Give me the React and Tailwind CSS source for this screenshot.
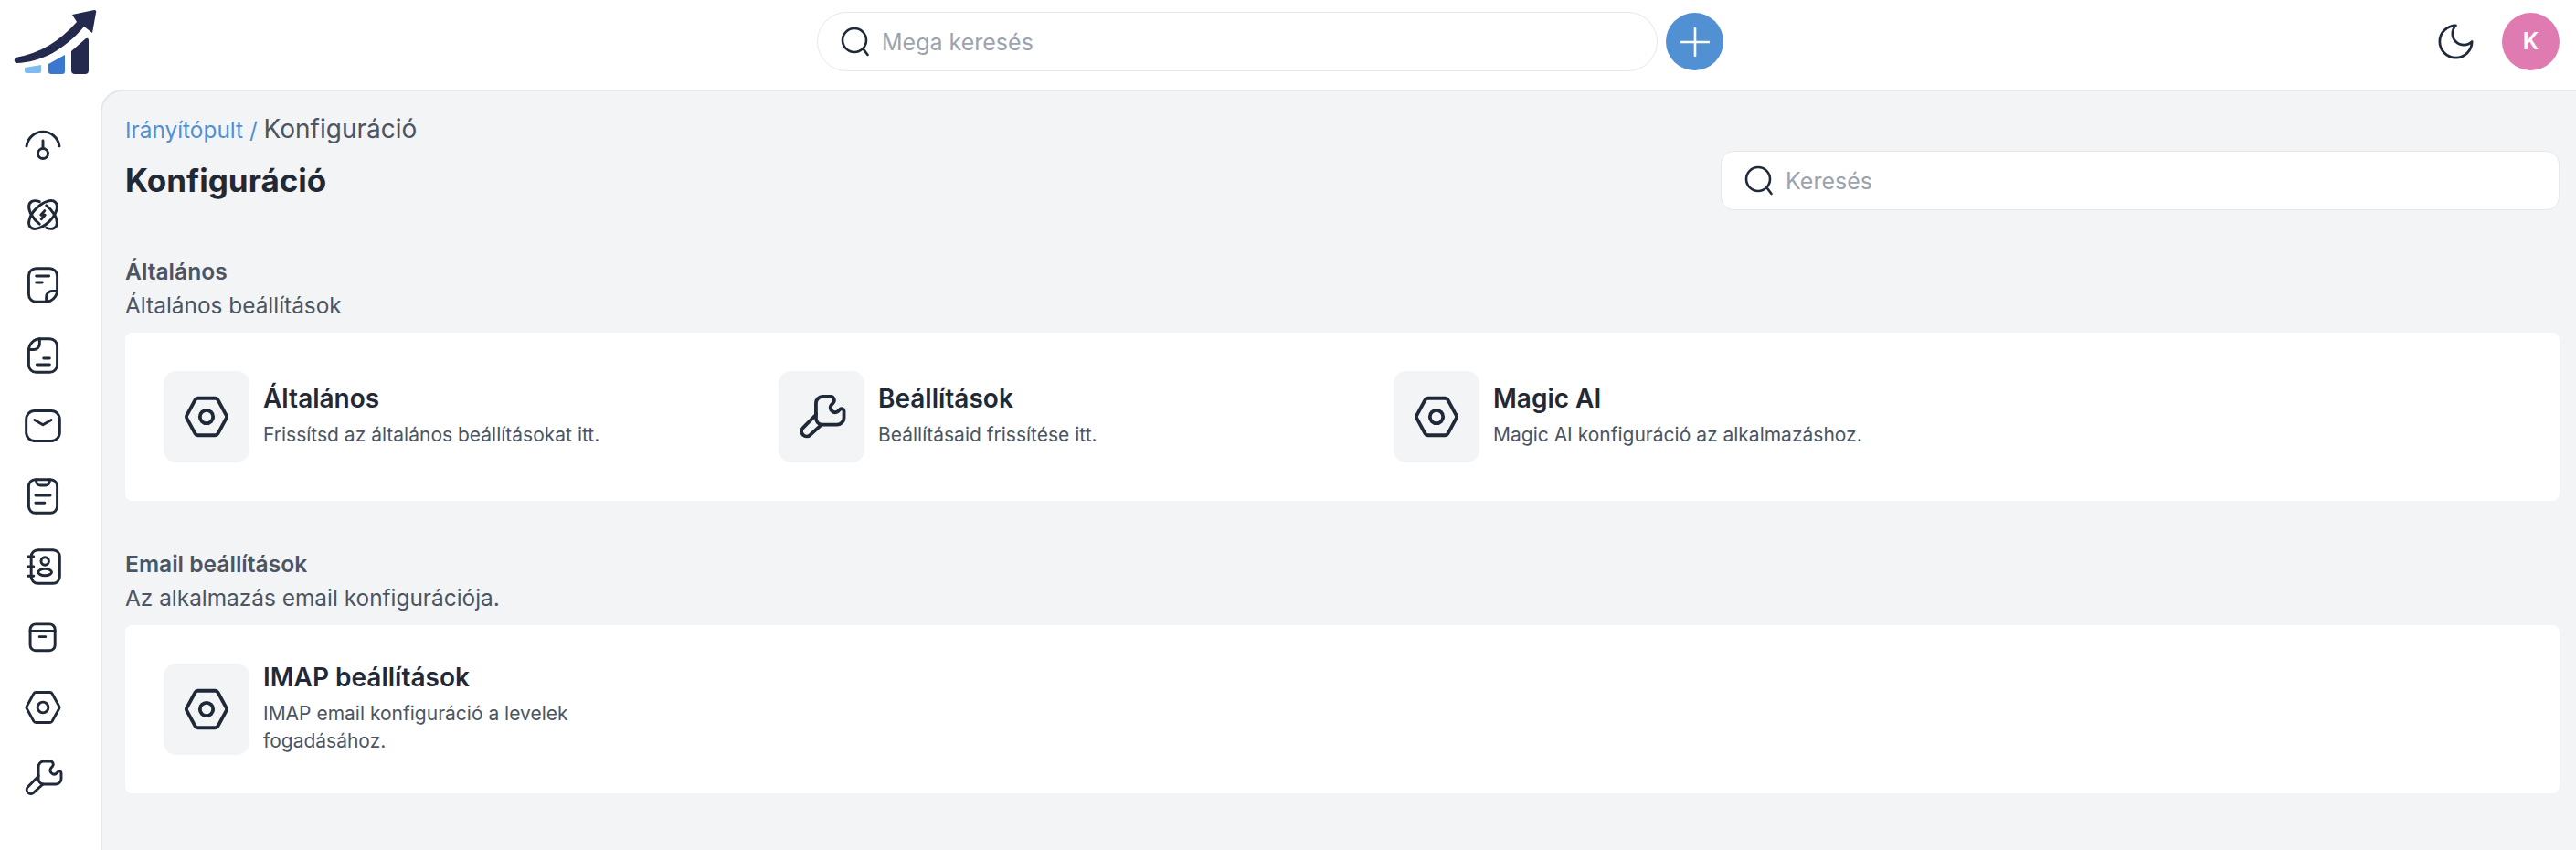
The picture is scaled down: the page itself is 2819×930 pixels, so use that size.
const Svg = ({ size = 44, sw = 1.6, children }) => (
  <svg width={size} height={size} viewBox="0 0 24 24" fill="none" stroke="#1f2937" strokeWidth={sw} strokeLinecap="round" strokeLinejoin="round" className="shrink-0">
    {children}
  </svg>
);

const HEX = 'M16.2 3H7.8a1.5 1.5 0 0 0-1.3.75L2.4 11.25a1.5 1.5 0 0 0 0 1.5l4.1 7.5A1.5 1.5 0 0 0 7.8 21h8.4a1.5 1.5 0 0 0 1.3-.75l4.1-7.5a1.5 1.5 0 0 0 0-1.5l-4.1-7.5A1.5 1.5 0 0 0 16.2 3z';
const WRENCH = 'M12.5 2.2h4a1.8 1.8 0 0 1 1.2 3l-.9 1a2.3 2.3 0 0 0 3.2 3.2l1-1a1.1 1.1 0 0 1 1.9.7v3.4a3.3 3.3 0 0 1-3.3 3.3H12l-5.5 5a2.4 2.4 0 0 1-3.5-3.4L9.3 11V5.4a3.2 3.2 0 0 1 3.2-3.2z';
const NOTE = 'M8 2h8a4.5 4.5 0 0 1 4.5 4.5V15a7 7 0 0 1-7 7H8a4.5 4.5 0 0 1-4.5-4.5v-11A4.5 4.5 0 0 1 8 2z';

const Hexagon = ({ size, sw }) => (
  <Svg size={size} sw={sw}>
    <path d={HEX} />
    <circle cx="12" cy="12" r="3.2" />
  </Svg>
);

const Wrench = ({ size, sw }) => (
  <Svg size={size} sw={sw}>
    <path d={WRENCH} />
    <path d="M9.3 10.5v2a3.3 3.3 0 0 0 2.7 3.3" />
  </Svg>
);

const navIcons = [
  <Svg key="gauge">
    <path d="M2.2 13A9.9 10 0 0 1 21.8 13" />
    <path d="M12 9.8v4.7" />
    <circle cx="12" cy="17.5" r="3" />
  </Svg>,
  <Svg key="orbit">
    <ellipse cx="12" cy="12" rx="10.5" ry="5.5" transform="rotate(-45 12 12)" />
    <g transform="translate(12 12) rotate(45)">
      <path d="M2.47 5.35A10.5 5.5 0 0 1-6.97-4.11" />
      <path d="M-2.47-5.35A10.5 5.5 0 0 1 6.97 4.11" />
    </g>
    <path d="M13 9.6l-2.2 2.5h2.4L11 14.6" />
  </Svg>,
  <Svg key="note">
    <path d={NOTE} />
    <path d="M20.5 15.5h-3a3.5 3.5 0 0 0-3.5 3.5v3" />
    <path d="M8 6.5h7.6M8 10.4h3.6" />
  </Svg>,
  <Svg key="note-flip">
    <g transform="rotate(180 12 12)">
      <path d={NOTE} />
      <path d="M20.5 15.5h-3a3.5 3.5 0 0 0-3.5 3.5v3" />
      <path d="M8 6.5h7.6M8 10.4h3.6" />
    </g>
  </Svg>,
  <Svg key="mail">
    <rect x="2" y="3" width="20" height="18" rx="5" />
    <path d="M7 8.5l5 2.8 5-2.8" />
  </Svg>,
  <Svg key="clipboard">
    <rect x="3.5" y="2" width="17" height="20" rx="4" />
    <path d="M8 2.2V3a2.5 2.5 0 0 0 2.5 2.5h3A2.5 2.5 0 0 0 16 3v-.8" />
    <path d="M7.6 11.5h8.8M7.6 16H13" />
  </Svg>,
  <Svg key="contacts">
    <rect x="5" y="2" width="17" height="20" rx="4" />
    <path d="M3 6h3.4M3 12h3.4M3 17.6h3.4" />
    <circle cx="13.2" cy="8.7" r="2.3" />
    <ellipse cx="13.2" cy="15.3" rx="4" ry="2" />
  </Svg>,
  <Svg key="archive">
    <rect x="4.4" y="4.3" width="14.8" height="15.7" rx="3.2" />
    <path d="M4.4 8.4h14.8M9.9 11.8h3.6" />
  </Svg>,
  <Hexagon key="hex" />,
  <Wrench key="wrench" />,
];

const Logo = () => (
  <svg width="110" height="90" viewBox="0 0 110 90" className="shrink-0">
    <path d="M17 63C45 58 65 45 84 24L79 16L103 11Q106 11 105 14L101 36L92 29C70 55 45 68 18 69Q14 67 17 63Z" fill="#232a4d" />
    <path d="M27 74L45 71V78Q45 80 43 80H29Q27 80 27 78Z" fill="#7dbbf0" />
    <path d="M53 70L71 60V78Q71 81 68 81H56Q53 81 53 78Z" fill="#3a78d0" />
    <path d="M78 56L94 42Q97 41 97 44V77Q97 81 93 81H82Q78 81 78 77Z" fill="#232a4d" />
  </svg>
);

const SearchIcon = () => (
  <svg width="34" height="34" viewBox="0 0 34 34" fill="none" stroke="#1f2937" strokeWidth="2.6" strokeLinecap="round" className="shrink-0">
    <circle cx="16" cy="15" r="13" />
    <path d="M26 25l4.5 6" />
  </svg>
);

const Item = ({ icon, title, desc }) => (
  <div className="flex items-center gap-[15px]">
    <div className="flex h-[100px] w-[94px] shrink-0 items-center justify-center rounded-[14px] bg-[#f3f4f6]">{icon}</div>
    <div className="max-w-[430px]">
      <div className="mb-[10px] text-[28px] leading-[30px] font-semibold text-[#1f2937]">{title}</div>
      <div className="text-[21px] leading-[30px] text-[#4b5563]">{desc}</div>
    </div>
  </div>
);

const Section = ({ title, sub, items, className }) => (
  <section className={className}>
    <h2 className="mb-[7px] text-[24.6px] leading-[30px] font-semibold text-[#4b5563]">{title}</h2>
    <p className="mb-[15px] text-[24.4px] leading-[30px] text-[#4b5563]">{sub}</p>
    <div className="grid grid-cols-4 gap-[112px] rounded-[8px] bg-white p-[42px]">
      {items.map((it) => (
        <Item key={it.title} {...it} />
      ))}
    </div>
  </section>
);

export default function App() {
  return (
    <div className="flex h-screen flex-col overflow-hidden bg-white font-['Inter',sans-serif]">
      <header className="flex h-[98px] shrink-0 items-center pr-[18px] pb-[7px]">
        <div className="w-[894px] shrink-0 self-start">
          <Logo />
        </div>
        <div className="flex h-[65px] w-[920px] items-center gap-[12px] rounded-full border border-[#e5e7eb] bg-white pl-[24px]">
          <SearchIcon />
          <span className="pt-[2px] text-[25px] text-[#9ca3af]">Mega keresés</span>
        </div>
        <button className="ml-[9px] flex h-[63px] w-[63px] items-center justify-center rounded-full bg-[#5090d3]">
          <svg width="32" height="32" viewBox="0 0 32 32" stroke="#fff" strokeWidth="2.6" strokeLinecap="round">
            <path d="M16 1v30M1 16h30" />
          </svg>
        </button>
        <div className="ml-auto flex items-center gap-[27px]">
          <Svg size={47} sw={1.4}>
            <path d="M12 3a6 6 0 0 0 9 9 9 9 0 1 1-9-9Z" />
          </Svg>
          <div className="flex h-[63px] w-[63px] items-center justify-center rounded-full bg-[#df7bb1] text-[25px] font-semibold text-white">K</div>
        </div>
      </header>

      <div className="flex min-h-0 flex-1">
        <nav className="flex w-[110px] shrink-0 flex-col items-center gap-[33px] pt-[38px] pr-[16px]">
          {navIcons}
        </nav>
        <main className="flex-1 rounded-tl-[24px] border-t-2 border-l-2 border-[#e5e7eb] bg-[#f3f4f6] pt-[26px] pr-[18px] pl-[25px]">
          <div className="text-[28px] leading-[30px] text-[#4b5563]">
            <span className="text-[24.4px] text-[#5090d3]">Irányítópult / </span>
            Konfiguráció
          </div>
          <div className="mt-[8px] flex items-center justify-between">
            <h1 className="text-[35px] font-bold text-[#1f2937]">Konfiguráció</h1>
            <div className="flex h-[65px] w-[918px] items-center gap-[12px] rounded-[14px] border border-[#e5e7eb] bg-white pl-[24px]">
              <SearchIcon />
              <span className="pt-[2px] text-[25px] text-[#9ca3af]">Keresés</span>
            </div>
          </div>
          <Section
            className="mt-[52px]"
            title="Általános"
            sub="Általános beállítások"
            items={[
              { icon: <Hexagon size={54} sw={1.7} />, title: 'Általános', desc: 'Frissítsd az általános beállításokat itt.' },
              { icon: <Wrench size={54} sw={1.7} />, title: 'Beállítások', desc: 'Beállításaid frissítése itt.' },
              { icon: <Hexagon size={54} sw={1.7} />, title: 'Magic AI', desc: 'Magic AI konfiguráció az alkalmazáshoz.' },
            ]}
          />
          <Section
            className="mt-[54px]"
            title="Email beállítások"
            sub="Az alkalmazás email konfigurációja."
            items={[
              { icon: <Hexagon size={54} sw={1.7} />, title: 'IMAP beállítások', desc: 'IMAP email konfiguráció a levelek fogadásához.' },
            ]}
          />
        </main>
      </div>
    </div>
  );
}
